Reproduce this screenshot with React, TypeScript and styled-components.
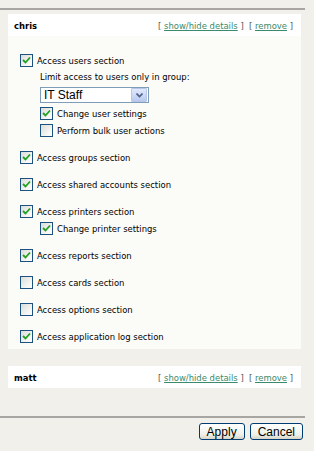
import styled, { createGlobalStyle } from "styled-components";

const GlobalStyle = createGlobalStyle`
  html, body {
    margin: 0;
    padding: 0;
    background: #f1f0eb;
  }
  body {
    font-family: "DejaVu Sans Condensed", "DejaVu Sans", Verdana, sans-serif;
    font-size: 9.4px;
    color: #000;
  }
`;

const Page = styled.div`
  width: 314px;
  padding-top: 8px;
`;

const Rule = styled.div`
  width: 305px;
  height: 0;
  border-top: 2px solid #a7a6a2;
`;

const Panel = styled.div<{ $gap: number }>`
  margin: ${(p) => p.$gap}px 0 0 8px;
  width: 293px;
`;

const Header = styled.div`
  background: #fff;
  height: 22px;
  padding: 0 6px;
  display: flex;
  align-items: center;
  justify-content: space-between;
`;

const Name = styled.span`
  font-weight: bold;
`;

const Actions = styled.span`
  color: #555;
  white-space: pre;
  padding-right: 2px;
`;

const Link = styled.a`
  color: #3b8a6c;
  text-decoration: underline;
  cursor: pointer;
`;

const Body = styled.div`
  background: #fbfbf8;
  padding: 16px 0 4px 12px;
  display: flex;
  flex-direction: column;
  gap: 10px;
`;

const Block = styled.div`
  display: flex;
  flex-direction: column;
`;

const Row = styled.label<{ $indent?: boolean }>`
  display: flex;
  align-items: center;
  gap: 4px;
  height: 17px;
  margin-left: ${(p) => (p.$indent ? 20 : 0)}px;
`;

const Note = styled.div`
  margin-left: 20px;
  height: 16px;
  line-height: 16px;
`;

const Box = styled.span`
  width: 11px;
  height: 11px;
  border: 1px solid #1c5180;
  background: linear-gradient(135deg, #dcdcd7 0%, #fafaf9 80%);
  display: inline-flex;
  align-items: center;
  justify-content: center;
  flex: none;
`;

const Select = styled.div`
  margin: 2px 0 2px 20px;
  width: 104px;
  height: 14px;
  border: 1px solid #7f9db9;
  background: #fff;
  display: flex;
  align-items: center;
  justify-content: space-between;
  padding-left: 3px;
  font-family: "Liberation Sans", Arial, sans-serif;
  font-size: 12px;
`;

const Drop = styled.span`
  width: 14px;
  height: 12px;
  margin-right: 1px;
  border: 1px solid #b7c7e7;
  border-radius: 1px;
  background: linear-gradient(#e1e9fd, #b9c9ef);
  display: flex;
  align-items: center;
  justify-content: center;
`;

const Footer = styled.div`
  display: flex;
  justify-content: flex-end;
  gap: 5px;
  width: 303px;
  margin-top: 5px;
`;

const Button = styled.button`
  font-family: "Liberation Sans", Arial, sans-serif;
  font-size: 12px;
  height: 17px;
  padding: 0 7px;
  border: 1px solid #003c74;
  border-radius: 3px;
  background: linear-gradient(#ffffff, #f0f0ea 70%, #d8d5c8);
  color: #000;
  line-height: 14px;
`;

const Spacer = styled.div`
  height: 28px;
`;

const Check = ({ on }: { on: boolean }) => (
  <Box>
    {on && (
      <svg width="9" height="9" viewBox="0 0 9 9">
        <path d="M1 4 L3.5 6.5 L8 1.5" stroke="#21a121" strokeWidth="1.8" fill="none" />
      </svg>
    )}
  </Box>
);

const Item = ({ on, label, indent }: { on: boolean; label: string; indent?: boolean }) => (
  <Row $indent={indent}>
    <Check on={on} />
    <span>{label}</span>
  </Row>
);

const UserHead = ({ name }: { name: string }) => (
  <Header>
    <Name>{name}</Name>
    <Actions>
      [ <Link>show/hide details</Link> ]  [ <Link>remove</Link> ]
    </Actions>
  </Header>
);

export default function App() {
  return (
    <Page>
      <GlobalStyle />
      <Rule />
      <Panel $gap={4}>
        <UserHead name="chris" />
        <Body>
          <Block>
            <Item on label="Access users section" />
            <Note>Limit access to users only in group:</Note>
            <Select>
              <span>IT Staff</span>
              <Drop>
                <svg width="7" height="5" viewBox="0 0 7 5">
                  <path d="M0.5 0.5 L3.5 3.5 L6.5 0.5" stroke="#4d6185" strokeWidth="1.6" fill="none" />
                </svg>
              </Drop>
            </Select>
            <Item on indent label="Change user settings" />
            <Item on={false} indent label="Perform bulk user actions" />
          </Block>
          <Block>
            <Item on label="Access groups section" />
          </Block>
          <Block>
            <Item on label="Access shared accounts section" />
          </Block>
          <Block>
            <Item on label="Access printers section" />
            <Item on indent label="Change printer settings" />
          </Block>
          <Block>
            <Item on label="Access reports section" />
          </Block>
          <Block>
            <Item on={false} label="Access cards section" />
          </Block>
          <Block>
            <Item on={false} label="Access options section" />
          </Block>
          <Block>
            <Item on label="Access application log section" />
          </Block>
        </Body>
      </Panel>
      <Panel $gap={17}>
        <UserHead name="matt" />
      </Panel>
      <Spacer />
      <Rule />
      <Footer>
        <Button>Apply</Button>
        <Button>Cancel</Button>
      </Footer>
    </Page>
  );
}
